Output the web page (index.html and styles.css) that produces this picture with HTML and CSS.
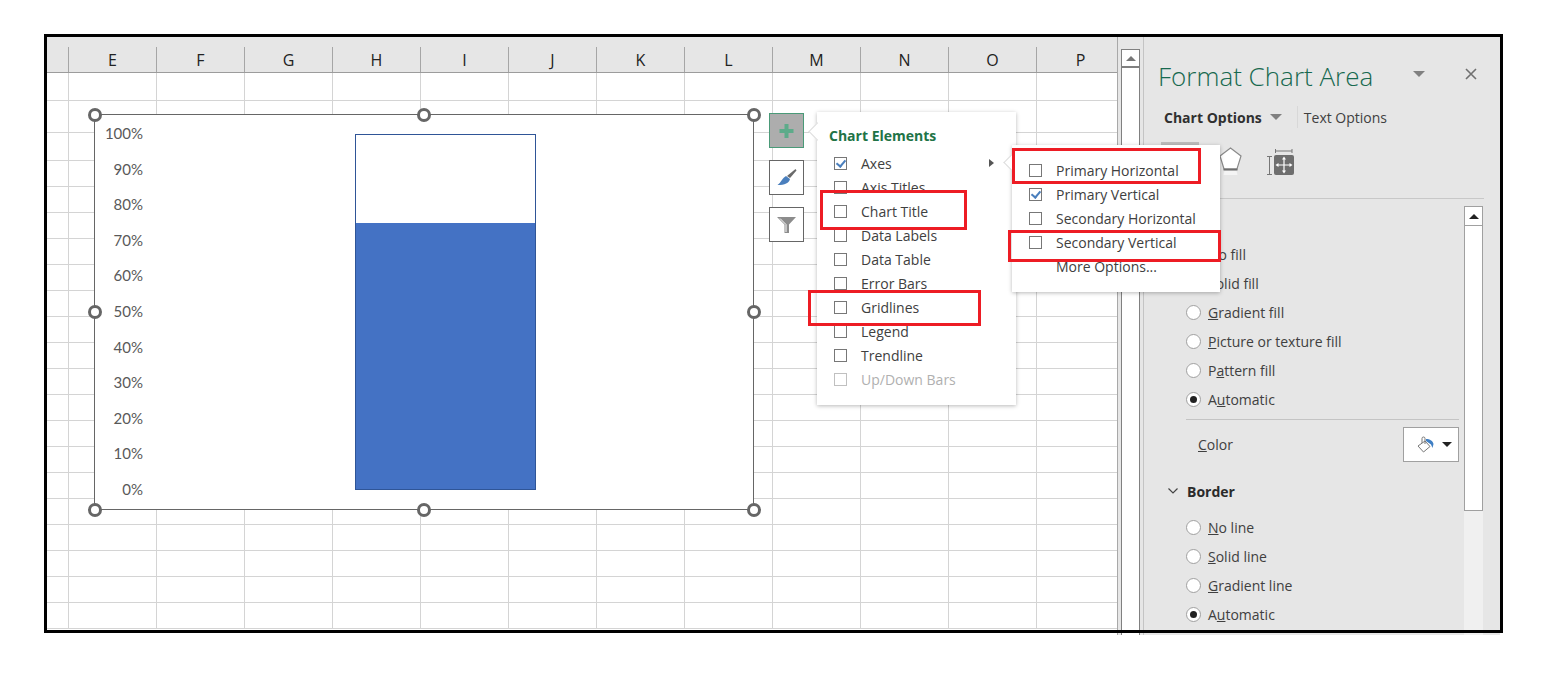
FILE: index.html
```html
<!DOCTYPE html>
<html>
  <head>
    <meta charset="UTF-8" />
    <title>Format Chart Area</title>
    <link rel="stylesheet" href="styles.css">
  </head>
  <body>
    <div class="shot">
      <div class="sheet">
        <div class="col-head">
          <div class="corner"></div>
          <div class="col">E</div>
          <div class="col">F</div>
          <div class="col">G</div>
          <div class="col">H</div>
          <div class="col">I</div>
          <div class="col">J</div>
          <div class="col">K</div>
          <div class="col">L</div>
          <div class="col">M</div>
          <div class="col">N</div>
          <div class="col">O</div>
          <div class="col">P</div>
        </div>
        <div class="cells">
          <div class="row r28"></div>
          <div class="row r32"></div>
          <div class="row r28"></div>
          <div class="row"></div><div class="row"></div><div class="row"></div><div class="row"></div>
          <div class="row"></div><div class="row"></div><div class="row"></div><div class="row"></div>
          <div class="row"></div><div class="row"></div><div class="row"></div><div class="row"></div>
          <div class="row"></div><div class="row"></div><div class="row"></div><div class="row"></div>
          <div class="row"></div><div class="row"></div>
        </div>
      </div>

      <div class="sheet-scroll">
        <div class="vbar">
          <div class="vbar-up"><span class="tri-up grey"></span></div>
        </div>
      </div>

      <div class="panel">
        <div class="panel-title">
          <span class="title-text">Format Chart Area</span>
          <span class="tri-down title-tri"></span>
          <svg class="close" width="12" height="12" viewBox="0 0 12 12"><path d="M1 1l10 10M11 1L1 11" stroke="#707070" stroke-width="1.6" fill="none"/></svg>
        </div>
        <div class="tabs">
          <b>Chart Options</b>
          <span class="tri-down tabs-tri"></span>
          <span class="tabs-sep"></span>
          <span>Text Options</span>
        </div>
        <div class="icon-tabs">
          <div class="icon-tab"></div>
          <svg class="ico-shape" width="23" height="29" viewBox="0 0 23 29">
            <path d="M11.5 1L22 9l-4 13H5L1 9z" fill="#fff" stroke="#8a8a8a" stroke-width="1.2"/>
            <path d="M4.5 22.5h14" stroke="#6e6e6e" stroke-width="2"/>
            <path d="M5.5 24l-1 4h14l-1-4z" fill="#f4f4f4"/>
          </svg>
          <svg class="ico-size" width="27" height="28" viewBox="0 0 27 28">
            <path d="M8.500 1v4M8.500 3h16.500M25 1v4M0 8.500h5M2.500 8.500v18M0 26.500h5" stroke="#777" stroke-width="1" fill="none"/>
            <rect x="7" y="7" width="20" height="20" rx="2" fill="#6e6e6e"/>
            <path d="M17 10v14M10 17h14" stroke="#fff" stroke-width="1.2"/>
            <path d="M17 8.500l2 3h-4zM17 25.500l2-3h-4zM8.500 17l3-2v4zM25.500 17l-3-2v4z" fill="#fff"/>
          </svg>
        </div>
        <div class="panel-body">
          <div class="options">
            <div class="radios fill-radios">
              <div class="radio-row"><span class="radio"></span><span><u>N</u>o fill</span></div>
              <div class="radio-row"><span class="radio"></span><span><u>S</u>olid fill</span></div>
              <div class="radio-row"><span class="radio"></span><span><u>G</u>radient fill</span></div>
              <div class="radio-row"><span class="radio"></span><span><u>P</u>icture or texture fill</span></div>
              <div class="radio-row"><span class="radio"></span><span>P<u>a</u>ttern fill</span></div>
              <div class="radio-row"><span class="radio on"></span><span>A<u>u</u>tomatic</span></div>
            </div>
            <div class="sep"></div>
            <div class="color-row">
              <span><u>C</u>olor</span>
              <div class="color-btn">
                <svg width="18" height="17" viewBox="0 0 18 17">
                  <path d="M8 5L1 10l5.500 6L13 10.500z" fill="#fff" stroke="#777" stroke-width="1"/>
                  <path d="M5 7V2.500a1.500 1.500 0 0 1 3 0V8" stroke="#777" stroke-width="1" fill="none"/>
                  <path d="M9 3c4 0 7 2 7.500 5l-1 4-1.500-3.500L9 5z" fill="#3f7fc4"/>
                </svg>
                <span class="tri-down color-tri"></span>
              </div>
            </div>
            <div class="section-head">
              <svg width="10" height="6" viewBox="0 0 10 6"><path d="M.5.500L5 5 9.500.500" stroke="#444" stroke-width="1.200" fill="none"/></svg>
              <b>Border</b>
            </div>
            <div class="radios">
              <div class="radio-row"><span class="radio"></span><span><u>N</u>o line</span></div>
              <div class="radio-row"><span class="radio"></span><span><u>S</u>olid line</span></div>
              <div class="radio-row"><span class="radio"></span><span><u>G</u>radient line</span></div>
              <div class="radio-row"><span class="radio on"></span><span>A<u>u</u>tomatic</span></div>
            </div>
          </div>
          <div class="panel-bar">
            <div class="panel-thumb">
              <div class="panel-up"><span class="tri-up"></span></div>
            </div>
          </div>
        </div>
      </div>

      <div class="chart">
        <div class="axis">
          <span>100%</span><span>90%</span><span>80%</span><span>70%</span><span>60%</span><span>50%</span>
          <span>40%</span><span>30%</span><span>20%</span><span>10%</span><span>0%</span>
        </div>
        <div class="bar"><div class="bar-fill" style="height: 75.1%"></div></div>
        <span class="handle h-tl"></span><span class="handle h-tc"></span><span class="handle h-tr"></span>
        <span class="handle h-ml"></span><span class="handle h-mr"></span>
        <span class="handle h-bl"></span><span class="handle h-bc"></span><span class="handle h-br"></span>
      </div>

      <div class="chart-btns">
        <div class="chart-btn active">
          <svg width="16" height="16" viewBox="0 0 16 16"><path d="M5.500 1h4v5h5v4h-5v5h-4v-5h-5V6h5z" fill="#5dab8a"/></svg>
        </div>
        <div class="chart-btn">
          <svg width="20" height="20" viewBox="0 0 20 20">
            <path d="M18.500 1L19.500 2.500 13 10 10 8z" fill="#6a6a6a"/>
            <path d="M9 8L13 11C12 15 8 17 .5 17 4 15 5 10 9 8z" fill="#4a7fbd"/>
          </svg>
        </div>
        <div class="chart-btn">
          <svg width="19" height="16" viewBox="0 0 19 16">
            <path d="M0 0h19l-7 7.500V16H7.500V7.500z" fill="#8c8c8c"/>
            <path d="M3 1.500L9 7.500V15" stroke="#fff" stroke-width="1" fill="none"/>
          </svg>
        </div>
      </div>

      <div class="menu menu-main">
        <div class="menu-title">Chart Elements</div>
        <div class="menu-row"><span class="check on"></span><span>Axes</span><span class="tri-right"></span></div>
        <div class="menu-row"><span class="check"></span><span>Axis Titles</span></div>
        <div class="menu-row"><span class="check"></span><span>Chart Title</span></div>
        <div class="menu-row"><span class="check"></span><span>Data Labels</span></div>
        <div class="menu-row"><span class="check"></span><span>Data Table</span></div>
        <div class="menu-row"><span class="check"></span><span>Error Bars</span></div>
        <div class="menu-row"><span class="check"></span><span>Gridlines</span></div>
        <div class="menu-row"><span class="check"></span><span>Legend</span></div>
        <div class="menu-row"><span class="check"></span><span>Trendline</span></div>
        <div class="menu-row off"><span class="check"></span><span>Up/Down Bars</span></div>
      </div>

      <div class="menu menu-sub">
        <div class="menu-row"><span class="check"></span><span>Primary Horizontal</span></div>
        <div class="menu-row"><span class="check on"></span><span>Primary Vertical</span></div>
        <div class="menu-row"><span class="check"></span><span>Secondary Horizontal</span></div>
        <div class="menu-row"><span class="check"></span><span>Secondary Vertical</span></div>
        <div class="menu-row"><span class="check blank"></span><span>More Options...</span></div>
      </div>

      <div class="red red-horizontal"></div>
      <div class="red red-title"></div>
      <div class="red red-vertical"></div>
      <div class="red red-grid"></div>
    </div>
  </body>
</html>
```

FILE: styles.css
```css
body {
  margin: 0;
  background: #fff;
  font-family: "Open Sans", "Liberation Sans", sans-serif;
  font-size: 14px;
  color: #404040;
}

.shot {
  position: relative;
  display: flex;
  box-sizing: border-box;
  width: 1459px;
  height: 601px;
  margin: 34px 0 0 44px;
  padding: 3px 3px 0 3px;
  overflow: hidden;
}
.shot::after {
  content: "";
  position: absolute;
  left: 0;
  top: 0;
  box-sizing: border-box;
  width: 100%;
  height: 599px;
  border: 3px solid #000;
  z-index: 5;
}

/* sheet */
.sheet {
  flex: none;
  box-sizing: border-box;
  width: 1071px;
  border-right: 1px solid #a8a8a8;
  overflow: hidden;
}
.col-head {
  display: flex;
  align-items: flex-end;
  height: 35px;
  background: #e6e6e6;
  border-bottom: 1px solid #9c9c9c;
}
.corner {
  flex: none;
  width: 21px;
  height: 25px;
  border-right: 1px solid #a6a6a6;
}
.col {
  flex: none;
  box-sizing: border-box;
  width: 88px;
  height: 25px;
  border-right: 1px solid #a6a6a6;
  text-align: center;
  font-size: 16px;
  line-height: 27px;
  color: #222;
}
.cells {
  background-image: linear-gradient(to right, transparent 87px, #d4d4d4 87px);
  background-size: 88px 100%;
  background-position: 22px 0;
}
.row {
  box-sizing: border-box;
  height: 26px;
  border-bottom: 1px solid #d4d4d4;
}
.r28 {
  height: 28px;
}
.r32 {
  height: 32px;
}

/* sheet scrollbar */
.sheet-scroll {
  flex: none;
  width: 25px;
  background: #e6e6e6;
  padding: 12px 3px 0 3px;
  box-sizing: border-box;
}
.vbar {
  box-sizing: border-box;
  width: 19px;
  height: 100%;
  background: #fff;
  border-left: 1px solid #808080;
  border-right: 1px solid #808080;
  border-top: 1px solid #808080;
}
.vbar-up {
  display: flex;
  align-items: center;
  justify-content: center;
  height: 16px;
  border-bottom: 2px solid #808080;
}

.tri-up {
  width: 0;
  height: 0;
  border-left: 5px solid transparent;
  border-right: 5px solid transparent;
  border-bottom: 5px solid #222;
}
.tri-up.grey {
  border-bottom-color: #777;
}
.tri-down {
  width: 0;
  height: 0;
  border-left: 6px solid transparent;
  border-right: 6px solid transparent;
  border-top: 6px solid #808080;
}
.tri-right {
  width: 0;
  height: 0;
  margin-left: auto;
  border-top: 4px solid transparent;
  border-bottom: 4px solid transparent;
  border-left: 5px solid #555;
}

/* task pane */
.panel {
  flex: 1;
  min-width: 0;
  background: #e6e6e6;
  border-left: 1px solid #c4c4c4;
  display: flex;
  flex-direction: column;
}
.panel-title {
  display: flex;
  align-items: center;
  height: 32px;
  margin-top: 23px;
  padding-left: 14px;
}
.title-text {
  font-size: 26px;
  font-weight: 300;
  line-height: 32px;
  color: #17694f;
}
.title-tri {
  margin-left: auto;
  margin-bottom: 4px;
}
.close {
  margin: 0 23px 4px 40px;
}
.tabs {
  display: flex;
  align-items: center;
  height: 20px;
  margin-top: 15px;
  padding-left: 20px;
}
.tabs b {
  font-weight: 700;
  color: #303030;
}
.tabs-tri {
  margin-left: 8px;
}
.tabs-sep {
  width: 1px;
  height: 22px;
  margin: 0 6px 0 15px;
  background: #d8d8d8;
}
.icon-tabs {
  display: flex;
  align-items: flex-start;
  box-sizing: border-box;
  height: 57px;
  margin: 15px 16px 0 16px;
  padding-left: 1px;
  border-bottom: 1px solid #c8c8c8;
}
.icon-tab {
  width: 38px;
  height: 38px;
  background: #bdbdbd;
}
.ico-shape {
  margin: 5px 0 0 20px;
}
.ico-size {
  margin: 6px 0 0 25px;
}
.panel-body {
  display: flex;
  flex: 1;
  margin: 0 16px;
}
.options {
  flex: none;
  box-sizing: border-box;
  width: 304px;
  padding-right: 5px;
}
.section-head {
  display: flex;
  align-items: center;
  gap: 9px;
  height: 20px;
  margin-top: 19px;
  padding-left: 8px;
}
.section-head b {
  color: #2b2b2b;
}
.radios {
  margin-top: 12px;
}
.fill-radios {
  margin-top: 41px;
}
.radio-row {
  display: flex;
  align-items: center;
  gap: 7px;
  height: 29px;
  padding-left: 26px;
}
.radio {
  flex: none;
  position: relative;
  box-sizing: border-box;
  width: 15px;
  height: 15px;
  background: #fff;
  border: 1px solid #a0a0a0;
  border-radius: 50%;
}
.radio.on::after {
  content: "";
  position: absolute;
  left: 3px;
  top: 3px;
  width: 7px;
  height: 7px;
  background: #222;
  border-radius: 50%;
}
.sep {
  height: 1px;
  margin: 5px 0 0 26px;
  background: #c4c4c4;
}
.color-row {
  display: flex;
  align-items: center;
  justify-content: space-between;
  margin: 7px 0 0 12px;
  padding-left: 26px;
}
.color-btn {
  display: flex;
  align-items: center;
  justify-content: flex-end;
  gap: 7px;
  box-sizing: border-box;
  width: 56px;
  height: 35px;
  padding-right: 6px;
  background: #fff;
  border: 1px solid #a0a0a0;
}
.color-tri {
  border-left-width: 5px;
  border-right-width: 5px;
  border-top: 5px solid #222;
}
.panel-bar {
  flex: none;
  width: 19px;
  margin-top: 7px;
  background: #f0f0f0;
}
.panel-thumb {
  box-sizing: border-box;
  height: 305px;
  background: #fff;
  border: 1px solid #a0a0a0;
}
.panel-up {
  display: flex;
  align-items: center;
  justify-content: center;
  height: 18px;
  border-bottom: 1px solid #a0a0a0;
}

/* chart */
.chart {
  position: absolute;
  left: 50px;
  top: 80px;
  display: flex;
  align-items: flex-start;
  box-sizing: border-box;
  width: 660px;
  height: 396px;
  background: #fff;
  border: 1px solid #666;
  z-index: 1;
}
.axis {
  display: flex;
  flex-direction: column;
  justify-content: space-between;
  align-items: flex-end;
  box-sizing: border-box;
  width: 48px;
  height: 376px;
  margin-top: 8px;
  font-family: "Lato", "Liberation Sans", sans-serif;
  font-size: 15px;
  line-height: 20px;
  color: #595959;
}
.bar {
  display: flex;
  align-items: flex-end;
  box-sizing: border-box;
  width: 181px;
  height: 356px;
  margin: 19px 0 0 212px;
  background: #fff;
  border: 1px solid #2f5597;
}
.bar-fill {
  width: 100%;
  background: #4472c4;
}
.handle {
  position: absolute;
  box-sizing: border-box;
  width: 14px;
  height: 14px;
  margin: -7px 0 0 -7px;
  background: #fff;
  border: 3px solid #666;
  border-radius: 50%;
}
.h-tl { left: 0; top: 0; }
.h-tc { left: 50%; top: 0; }
.h-tr { left: calc(100% + 1px); top: 0; }
.h-ml { left: 0; top: 50%; }
.h-mr { left: calc(100% + 1px); top: 50%; }
.h-bl { left: 0; top: calc(100% + 1px); }
.h-bc { left: 50%; top: calc(100% + 1px); }
.h-br { left: calc(100% + 1px); top: calc(100% + 1px); }

.chart-btns {
  position: absolute;
  left: 725px;
  top: 79px;
  display: flex;
  flex-direction: column;
  gap: 12px;
  z-index: 1;
}
.chart-btn {
  display: flex;
  align-items: center;
  justify-content: center;
  box-sizing: border-box;
  width: 35px;
  height: 35px;
  background: #fff;
  border: 1px solid #666;
}
.chart-btn.active {
  background: #adadad;
  border-color: #4a9a78;
}

/* popup menus */
.menu {
  position: absolute;
  box-sizing: border-box;
  background: #fff;
  box-shadow: 0 1px 4px rgba(0, 0, 0, 0.28);
  z-index: 2;
}
.menu::before {
  content: "";
  position: absolute;
  left: -6px;
  width: 12px;
  height: 12px;
  background: #fff;
  border-left: 1px solid #ddd;
  border-bottom: 1px solid #ddd;
  transform: rotate(45deg);
}
.menu-main {
  left: 773px;
  top: 78px;
  width: 199px;
  height: 293px;
  padding: 14px 22px 0 17px;
}
.menu-main::before {
  top: 13px;
}
.menu-sub {
  left: 968px;
  top: 111px;
  width: 208px;
  height: 147px;
  padding: 13px 0 0 17px;
}
.menu-sub::before {
  top: 11px;
}
.menu-title {
  height: 20px;
  margin: 0 0 5px -5px;
  font-weight: 700;
  line-height: 20px;
  color: #217346;
}
.menu-row {
  display: flex;
  align-items: center;
  gap: 14px;
  height: 24px;
}
.check {
  flex: none;
  box-sizing: border-box;
  position: relative;
  width: 13px;
  height: 13px;
  background: #fff;
  border: 1px solid #777;
}
.check.on::after {
  content: "";
  position: absolute;
  left: 3px;
  top: 0;
  width: 4px;
  height: 7px;
  border-right: 2px solid #4a7fbd;
  border-bottom: 2px solid #4a7fbd;
  transform: rotate(40deg);
}
.check.blank {
  visibility: hidden;
}
.off {
  color: #b0b0b0;
}
.off .check {
  border-color: #c0c0c0;
}

/* annotations */
.red {
  position: absolute;
  box-sizing: border-box;
  border: 3px solid #ed1c24;
  z-index: 3;
}
.red-horizontal {
  left: 968px;
  top: 114px;
  width: 189px;
  height: 36px;
}
.red-title {
  left: 776px;
  top: 156px;
  width: 147px;
  height: 40px;
}
.red-vertical {
  left: 964px;
  top: 196px;
  width: 213px;
  height: 32px;
}
.red-grid {
  left: 764px;
  top: 256px;
  width: 173px;
  height: 36px;
}
```
